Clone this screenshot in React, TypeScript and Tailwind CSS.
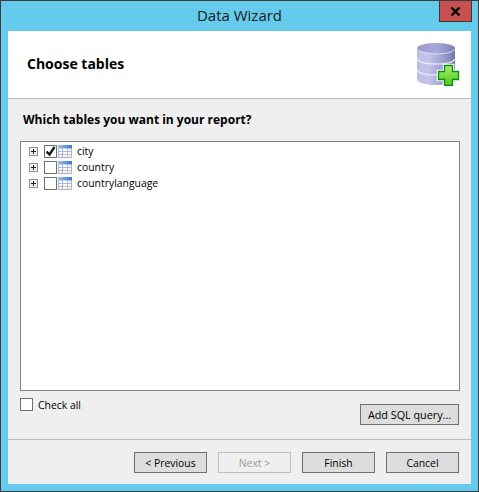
function DbIcon() {
  return (
    <svg width="44" height="44" viewBox="0 0 44 44" className="block">
      <defs>
        <linearGradient id="can" x1="0" x2="1" y1="0" y2="0">
          <stop offset="0" stopColor="#bdbde6" />
          <stop offset="0.3" stopColor="#c4c4ea" />
          <stop offset="0.7" stopColor="#9c9cd0" />
          <stop offset="1" stopColor="#7474ac" />
        </linearGradient>
        <linearGradient id="lid" x1="0" x2="1" y1="0" y2="0">
          <stop offset="0" stopColor="#9c9cd2" />
          <stop offset="0.5" stopColor="#a8a8da" />
          <stop offset="1" stopColor="#8080ba" />
        </linearGradient>
        <linearGradient id="plus" x1="0" x2="0" y1="0" y2="1">
          <stop offset="0" stopColor="#a6f06c" />
          <stop offset="1" stopColor="#4cc81c" />
        </linearGradient>
      </defs>
      <path d="M1 6v31c0 3.500 8 6 19 6s19-2.500 19-6V6z" fill="url(#can)" />
      <ellipse cx="20" cy="6" rx="19" ry="5" fill="url(#lid)" />
      <path d="M1 7c2 3.500 9 5 19 5s17-1.500 19-5" fill="none" stroke="#d8d8f2" strokeWidth="1" />
      <path d="M1 17c2 3.500 9 5 19 5s17-1.500 19-5" fill="none" stroke="#f2f2fc" strokeWidth="1.200" />
      <path d="M1 28c2 3.500 9 5 19 5s17-1.500 19-5" fill="none" stroke="#f2f2fc" strokeWidth="1.200" />
      <path d="M28 23h9v6h6v9h-6v6h-9v-6h-6v-9h6z" fill="url(#plus)" stroke="#fff" strokeWidth="2.500" />
      <path
        d="M28.500 23.500h8v6h6v8h-6v6h-8v-6h-6v-8h6z"
        fill="url(#plus)"
        stroke="#0b8a10"
        strokeWidth="1.300"
      />
    </svg>
  );
}

function TableIcon() {
  return (
    <svg width="14" height="13" viewBox="0 0 14 13" className="block">
      <defs>
        <linearGradient id="head" x1="0" x2="1" y1="0" y2="0">
          <stop offset="0" stopColor="#9cc0ea" />
          <stop offset="1" stopColor="#3f78cc" />
        </linearGradient>
      </defs>
      <rect x="0.500" y="0.500" width="13" height="12" fill="#fff" stroke="#a6b4c8" />
      <rect x="0" y="0" width="14" height="3.500" fill="url(#head)" />
      <path d="M0 6.500h14M0 9.500h14M4.500 3v10M9.500 3v10" stroke="#b0bccc" strokeWidth="1" />
    </svg>
  );
}

function Expander() {
  return (
    <span className="flex h-[9px] w-[9px] items-center justify-center border border-[#919191] bg-[#ececec]">
      <svg width="7" height="7" viewBox="0 0 7 7" className="block">
        <path d="M1 3.500h5M3.500 1v5" stroke="#222" strokeWidth="1" />
      </svg>
    </span>
  );
}

function Check({ checked }: { checked?: boolean }) {
  return (
    <span className="flex h-[13px] w-[13px] shrink-0 items-center justify-center border border-[#707070] bg-white">
      {checked && (
        <svg width="11" height="11" viewBox="0 0 11 11" className="block">
          <path d="M1.500 5.500l3 3 5-7.500" fill="none" stroke="#1c1c1c" strokeWidth="2.400" />
        </svg>
      )}
    </span>
  );
}

function TreeRow({ label, checked }: { label: string; checked?: boolean }) {
  return (
    <div className="flex h-4 items-center">
      <Expander />
      <span className="ml-[6px]">
        <Check checked={checked} />
      </span>
      <span className="ml-px">
        <TableIcon />
      </span>
      <span className="ml-[5px] mt-px text-[10.400px] text-black">{label}</span>
    </div>
  );
}

function Btn({ label, disabled, wide }: { label: string; disabled?: boolean; wide?: boolean }) {
  return (
    <button
      className={
        wide
          ? "block h-[21px] w-[99px] border border-[#707070] bg-[#dddddd] pt-px text-[10.800px] leading-none text-black"
          : disabled
            ? "block h-[21px] w-[73px] border border-[#bfbfbf] bg-[#efefef] pt-px text-[10.400px] leading-none text-[#9a9a9a]"
            : "block h-[21px] w-[73px] border border-[#707070] bg-[#dddddd] pt-px text-[10.400px] leading-none text-black"
      }
    >
      {label}
    </button>
  );
}

export default function App() {
  return (
    <div className="relative flex h-[492px] w-[479px] flex-col border border-[#3c3c3c] bg-[#65cbec] font-['Open_Sans',sans-serif]">
      <div className="flex h-[30px] shrink-0 items-center justify-center pb-[1px] text-[15px] text-[#1a1a1a]">
        Data Wizard
      </div>
      <div className="absolute right-[6px] top-0 flex h-[21px] w-[33px] items-center justify-center border border-t-0 border-[#4a3030] bg-[#c75050]">
        <svg width="11" height="9" viewBox="0 0 11 9" className="block">
          <path d="M1.500 0.500l8 8M9.500 0.500l-8 8" stroke="#000" strokeWidth="2.200" />
        </svg>
      </div>

      <div className="mx-[7px] flex h-[453px] shrink-0 flex-col bg-[#efefef]">
        <div className="flex h-[68px] shrink-0 items-center justify-between border-b border-[#bdbdbd] bg-white pb-[1px] pl-[19px] pr-[11px]">
          <span className="mb-[2px] text-[14px] font-bold text-black">Choose tables</span>
          <DbIcon />
        </div>

        <div className="flex min-h-0 flex-1 flex-col pl-[12px] pr-[11px]">
          <div className="mt-[12px] h-[18px] pl-[3px] text-[12px] font-bold leading-[18px] text-black">
            Which tables you want in your report?
          </div>
          <div className="mt-[12px] h-[250px] border border-[#82828c] bg-white pl-[8px] pt-px">
            <TreeRow label="city" checked />
            <TreeRow label="country" />
            <TreeRow label="countrylanguage" />
          </div>
          <div className="flex items-start justify-between pr-px">
            <label className="mt-[7px] flex h-[13px] items-center gap-[5px] text-[10.400px] leading-none text-black">
              <Check />
              <span className="mt-[2px]">Check all</span>
            </label>
            <div className="mt-[13px]">
              <Btn label="Add SQL query..." wide />
            </div>
          </div>
        </div>

        <div className="mb-[11px] flex shrink-0 items-center justify-end gap-[11px] border-t border-[#bdbdbd] pr-[12px] pt-[12px]">
          <Btn label="< Previous" />
          <Btn label="Next >" disabled />
          <Btn label="Finish" />
          <Btn label="Cancel" />
        </div>
      </div>
    </div>
  );
}
